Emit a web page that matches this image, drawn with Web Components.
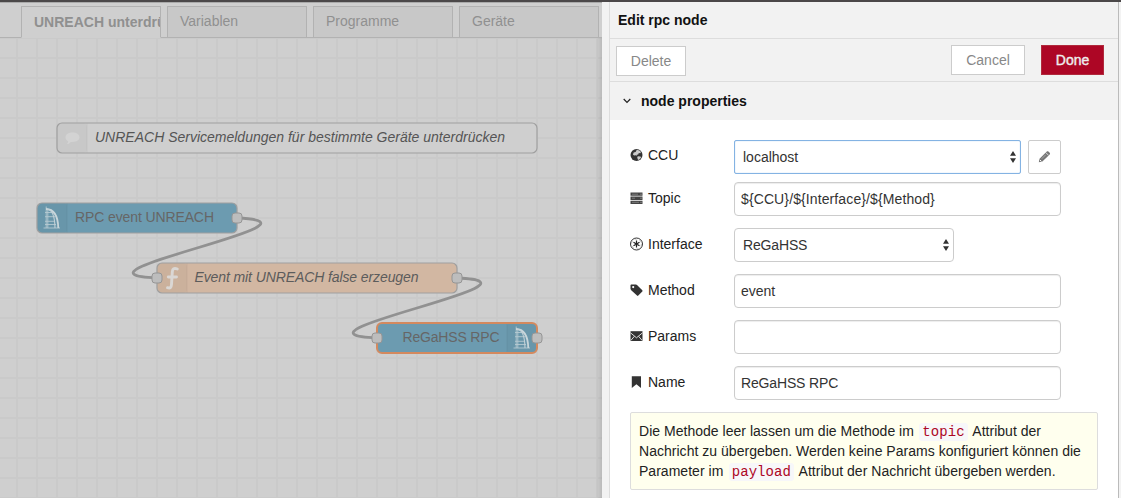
<!DOCTYPE html>
<html lang="de">
<head>
<meta charset="utf-8">
<title>Flow editor</title>
<style>
html,body{margin:0;height:100%;overflow:hidden}
body{font:14px/20px "Liberation Sans",Arial,sans-serif;color:#333}
</style>
</head>
<body>
<flow-editor></flow-editor>
<script>
const define = (name, html, setup) => customElements.define(name, class extends HTMLElement {
  connectedCallback() {
    if (this.shadowRoot) return;
    const root = this.attachShadow({mode: 'open'});
    root.innerHTML = typeof html === 'function' ? html(this) : html;
    if (setup) setup(this, root);
  }
});

/* ---------- workspace tabs ---------- */
define('flow-tab', `<style>
:host{display:block;box-sizing:border-box;flex:0 0 140px;width:140px;height:32px;border:1px solid #b2b2b2;background:#c8c8c8;color:#909090;padding-left:12px;line-height:28px;white-space:nowrap;overflow:hidden}
:host([active]){background:#cfcfcf;border-bottom-color:#cfcfcf;font-weight:bold;line-height:30px;color:#909090}
</style><slot></slot>`);

define('tab-bar', `<style>
:host{display:block;height:35px;background:#cfcfcf;box-shadow:inset 0 -1px #b2b2b2}
div{display:flex;gap:6px;padding:3px 0 0 21px}
</style><div><slot></slot></div>`);

/* ---------- canvas ---------- */
const glyphs = {
  comment: '<path d="M15.500 9.500c-4 0-7 2-7 4.800 0 1.800 1 3.100 2.600 4 0 1-.5 2-1.200 2.800 1.800-.2 3-1.100 3.800-2.200h1.800c4 0 7-1.800 7-4.600s-3-4.800-7-4.800z" fill="#d3d3d3" stroke="none"/>',
  tower: '<path d="M9.200 3.500v21.500M10.800 5.500v19.500M6.500 25h16.500M8 9.500h8M8 13.700h10M8 18.300h10M8 21.500h11" fill="none" stroke="#b5c9d1" stroke-width=".9"/><path d="M9 6c8.500.2 12 8 12.300 19" fill="none" stroke="#c8d6db" stroke-width="1.800"/><path d="M10.500 6.300c5 .8 7.300 8 7.500 18.700" fill="none" stroke="#c0d0d7" stroke-width="1.100"/>',
  fn: '<path d="M20.300 6c-3.200-1.300-4.800-.2-5 2.800l-.8 12.700c-.2 3-1.400 4.200-4 3.200M11.300 14h8.200" fill="none" stroke="#dad7d4" stroke-width="2.900" stroke-linecap="round"/>'
};
define('flow-node', el => {
  const a = n => el.getAttribute(n);
  const w = +a('w'), right = el.hasAttribute('icon-right');
  const ix = right ? w - 30 : 0;
  const sel = el.hasAttribute('selected');
  const port = x => `<rect x="${x}" y="10" width="10" height="10" rx="3" fill="#bdbdbd" stroke="#959595"/>`;
  return `<style>
:host{position:absolute;display:block;height:30px}
svg{display:block;overflow:visible}
text{font:${el.hasAttribute('italic') ? 'italic ' : ''}14px "Liberation Sans",Arial,sans-serif}
</style>
<svg width="${w}" height="30">
<rect width="${w}" height="30" rx="5" fill="${a('fill')}" stroke="none"/>
<rect x="${ix}" width="30" height="30" rx="4" fill="#000" fill-opacity=".03"/>
<path d="M${right ? ix : 30} 0v30" stroke="#000" stroke-opacity=".05"/>
<g transform="translate(${ix})">${glyphs[a('icon')]}</g>
<rect width="${w}" height="30" rx="5" fill="none" stroke="${sel ? '#d4895e' : '#9f9f9f'}" stroke-width="${sel ? 2 : 1.2}"/>
${el.hasAttribute('in') ? port(-5) : ''}${el.hasAttribute('out') ? port(w - 5) : ''}
<text x="${a('tx')}" y="19" fill="${a('ink')}" textLength="${a('tw')}">${el.textContent}</text>
</svg>`;
}, el => { el.style.left = el.getAttribute('x') + 'px'; el.style.top = el.getAttribute('y') + 'px'; });

define('flow-canvas', `<style>
:host{display:block;position:relative;flex:1;overflow:hidden;background:#cfcfcf}
.grid{display:block;width:100%;height:100%}
.edge{position:absolute;inset:0 0 0 auto;width:6px;background:linear-gradient(90deg,#0000,#0000001a)}
</style>
<svg class="grid">
<defs><pattern id="g" width="20" height="20" patternUnits="userSpaceOnUse" x="16" y="19"><path d="M1 0v20M0 1h20" stroke="#cacaca" stroke-width="2"/></pattern></defs>
<rect width="100%" height="100%" fill="url(#g)"/>
<g transform="translate(0 -38)" fill="none" stroke="#919191" stroke-width="2.800">
<path d="M237 218C344 222 50 274 157 278"/><path d="M457 278C564 282 270 334 377 338"/></g>
</svg><slot></slot><div class="edge"></div>`);

/* ---------- form icons ---------- */
const icons = {
  globe: '<circle cx="6.500" cy="7" r="6" fill="#333"/><path d="M6.800 1.800l2.600.6 1.600 1.600-.7 1.300-1.500-.2-.6 1.300-1.500.3.2 1.100-1.300-.6-1.500.4-1.200-1.200.8-1.800 1.900-.7zM7.800 8.200l2.800.2.400 1.300-2.200 2.300-.9-.4-.7-2z" fill="#ccc"/>',
  server: '<path d="M.5 1.500h12v3.300H.5zM.5 5.600h12v3.300H.5zM.5 9.700h12V13H.5z" fill="#444"/><path d="M2 3.200h6M2 7.200h3M2 11.300h7" stroke="#888" stroke-width=".8"/><path d="M10.500 3.200h1M10.500 7.200h1M10.500 11.300h1" stroke="#bbb"/>',
  empire: '<circle cx="6.500" cy="7" r="6" fill="none" stroke="#333" stroke-width="1"/><circle cx="6.500" cy="7" r="4.900" fill="none" stroke="#777" stroke-width=".4" stroke-dasharray="2.600 2.530"/><path d="M6.500 3.500v7M3.500 5.200l6 3.600M9.500 5.200l-6 3.600" stroke="#222" stroke-width="1.200"/>',
  tag: '<path fill-rule="evenodd" d="M.5 2.500c0-.6.4-1 1-1H6l1 .5 5.300 5.300c.4.4.4.9 0 1.300l-4 4c-.4.4-.9.4-1.300 0L1.200 7.300.5 6zM3.200 3a1.100 1.100 0 100 2.200 1.100 1.100 0 000-2.200z" fill="#333"/>',
  envelope: '<path d="M.5 2.200h12V12H.5z" fill="#333"/><path d="M.5 3.800l6 5 6-5M.8 11.500l3.600-4.200M12.200 11.500l-3.600-4.200" fill="none" stroke="#ddd" stroke-width="1"/>',
  bookmark: '<path d="M1.800 1.200h9.200v11.800L6.400 9.300l-4.600 3.700z" fill="#333"/>',
  pencil: '<path d="M.8 12.300l.7-3.600L8.800 1.500c.5-.5 1.100-.5 1.600 0l1.300 1.300c.5.500.5 1.100 0 1.600L4.400 11.600z" fill="#777"/><path d="M7.800 2.600l2.800 2.800" stroke="#fff" stroke-width=".7"/><path d="M3.800 8.700l4-4" stroke="#bbb" stroke-width=".7"/><path d="M1.900 9.900l1.400 1.400" stroke="#fff" stroke-width="1"/>'
};
define('form-icon', el => `<style>:host{display:inline-block;width:13px;height:14px}svg{display:block}</style>
<svg width="13" height="14" viewBox="0 0 13 14">${icons[el.getAttribute('name')]}</svg>`);

/* ---------- form controls ---------- */
define('form-row', el => `<style>
:host{display:flex;align-items:flex-start;height:34px;margin-bottom:12px}
:host(:first-of-type) .label{margin-top:5px}
.label{display:flex;align-items:center;gap:5px;width:104px;height:20px;margin-top:6px;color:#222}
</style><div class="label"><form-icon name="${el.getAttribute('icon')}"></form-icon><span>${el.getAttribute('label')}</span></div><slot></slot>`);

define('text-field', `<style>
:host{display:block;box-sizing:border-box;width:327px;height:34px;border:1px solid #ccc;border-radius:4px;padding:0 6px;line-height:33px;background:#fff;box-shadow:inset 0 1px 1px #00000013;color:#333}
</style><slot></slot>`);

define('select-field', `<style>
:host{display:flex;box-sizing:border-box;width:220px;height:34px;border:1px solid #ccc;border-radius:4px;padding:0 4px 0 8px;align-items:center;justify-content:space-between;background:#fff;color:#333}
:host([focused]){width:287px;border-color:#84b3e3;border-radius:2px;box-shadow:inset 0 0 1px #84b3e3}
svg{display:block}
</style><span><slot></slot></span><svg width="6" height="12"><path d="M0 4.800h6L3 0zM0 7.200h6L3 12z" fill="#333"/></svg>`);

define('tool-button', `<style>
:host{display:flex;box-sizing:border-box;align-items:center;justify-content:center;height:30px;border:1px solid #ccc;background:#fff;color:#888}
:host([primary]){background:#ad0625;border-color:#b02a3c;color:#eee;-webkit-text-stroke:.4px #eee}
:host([square]){width:33px;height:34px;margin-left:7px;border-radius:2px}
</style><slot></slot>`);

define('form-tip', `<style>
:host{display:block;box-sizing:border-box;width:468px;height:78px;border:1px solid #ddd;border-radius:2px;background:#ffffee;padding:8px;line-height:20px;color:#222;white-space:nowrap;letter-spacing:.025px}
::slotted(code){font:14px/16px "Liberation Mono","Courier New",monospace;letter-spacing:.05px;color:#ad0625;background:#f7f7f9;border-radius:3px;padding:1px 3px;margin:0 1.500px}
</style><slot></slot>`);

/* ---------- edit tray ---------- */
define('edit-tray', `<style>
:host{display:flex;box-sizing:border-box;width:519px;border-left:7px solid #f2f2f2;background:#fff;border-right:2px solid #f3f3f3}
.tray{flex:1;box-sizing:border-box;border:solid #ccc;border-width:0 1px;border-left-color:#ddd;border-right-color:#bbb}
header{height:36px;padding-left:8px;line-height:37px;background:#f2f2f2;border-bottom:1px solid #ddd;font-weight:bold;color:#111}
.tools{display:flex;align-items:flex-start;box-sizing:border-box;height:43px;padding:6px 14px 0 6px;background:#f2f2f2;border-bottom:1px solid #ddd}
.delete{width:70px;margin:1px auto 0 0}.cancel{width:74px;margin-right:16px}.done{width:63px}
.section{display:flex;align-items:center;gap:10px;height:38px;padding-left:13px;background:#f2f2f2;font-weight:bold;color:#111}
.form{padding:20px 20px 0}
.wide{letter-spacing:.11px}.tight{letter-spacing:-.15px}
</style>
<div class="tray">
<header>Edit rpc node</header>
<div class="tools"><tool-button class="delete">Delete</tool-button><tool-button class="cancel">Cancel</tool-button><tool-button class="done" primary>Done</tool-button></div>
<div class="section"><svg width="8" height="6"><path d="M.7 1l3.300 3.500L7.300 1" fill="none" stroke="#222" stroke-width="1.200"/></svg>node properties</div>
<div class="form">
<form-row icon="globe" label="CCU" style="margin-bottom:8px"><select-field focused>localhost</select-field><tool-button square><form-icon name="pencil"></form-icon></tool-button></form-row>
<form-row icon="server" label="Topic"><text-field class="wide">\${CCU}/\${Interface}/\${Method}</text-field></form-row>
<form-row icon="empire" label="Interface"><select-field class="tight">ReGaHSS</select-field></form-row>
<form-row icon="tag" label="Method"><text-field>event</text-field></form-row>
<form-row icon="envelope" label="Params"><text-field></text-field></form-row>
<form-row icon="bookmark" label="Name"><text-field class="tight">ReGaHSS RPC</text-field></form-row>
<form-tip>Die Methode leer lassen um die Methode im <code>topic</code> Attribut der<br>Nachricht zu übergeben. Werden keine Params konfiguriert können die<br>Parameter im <code>payload</code> Attribut der Nachricht übergeben werden.</form-tip>
</div></div>`);

/* ---------- page ---------- */
define('flow-editor', `<style>
:host{display:flex;flex-direction:column;height:100vh}
.top{background:#4b4849;border-bottom:1px solid #aaa;box-sizing:border-box;flex:0 0 3px;height:3px}
.main{display:flex;flex:1;min-height:0}
.work{display:flex;flex-direction:column;width:602px}
edit-tray{margin-top:-1px}
</style>
<div class="top"></div>
<div class="main">
<div class="work">
<tab-bar><flow-tab active>UNREACH unterdrü</flow-tab><flow-tab>Variablen</flow-tab><flow-tab>Programme</flow-tab><flow-tab>Geräte</flow-tab></tab-bar>
<flow-canvas>
<flow-node x="57" y="85" w="480" fill="#cfcfcf" icon="comment" italic tx="38" tw="410" ink="#555">UNREACH Servicemeldungen für bestimmte Geräte unterdrücken</flow-node>
<flow-node x="37" y="165" w="200" fill="#6c9bb0" icon="tower" out tx="38" tw="139" ink="#666">RPC event UNREACH</flow-node>
<flow-node x="157" y="225" w="300" fill="#d2b7a2" icon="fn" italic in out tx="37.500" tw="224" ink="#5c5c5c">Event mit UNREACH false erzeugen</flow-node>
<flow-node x="377" y="285" w="160" fill="#6c9bb0" icon="tower" icon-right selected in out tx="25.500" tw="97" ink="#666">ReGaHSS RPC</flow-node>
</flow-canvas>
</div>
<edit-tray></edit-tray>
</div>`);
</script>
</body>
</html>
